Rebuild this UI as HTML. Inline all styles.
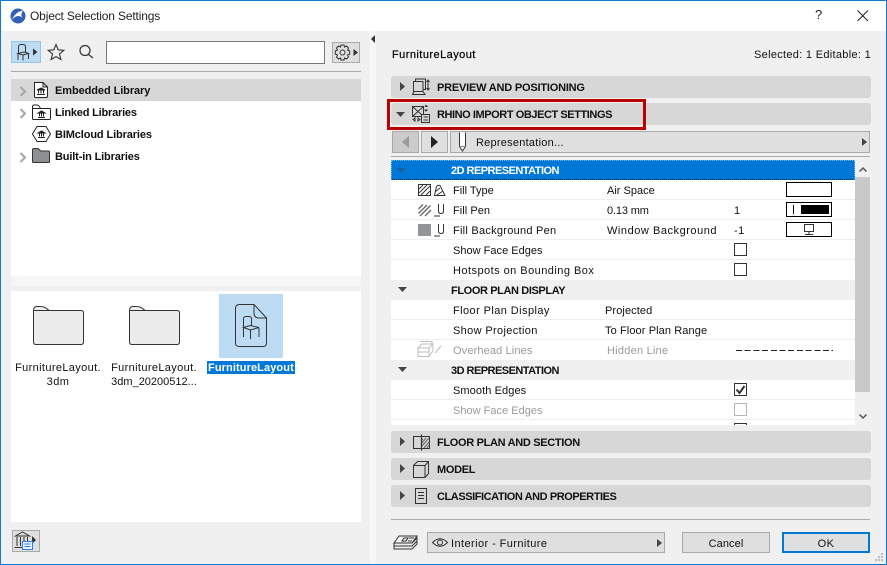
<!DOCTYPE html>
<html><head><meta charset="utf-8"><style>
html,body{margin:0;padding:0;background:#fff}
#w{position:relative;width:887px;height:565px;overflow:hidden;background:#f0f0f0;font:11px/14px "Liberation Sans",sans-serif;color:#111;letter-spacing:.42px}
#w div,#w span,#w svg{position:absolute;display:block;box-sizing:border-box}
.t{white-space:nowrap;margin-top:1px}
.b{font-weight:bold;letter-spacing:-.35px}
.g{color:#9a9a9a}
.sec{left:391px;width:480px;height:22px;background:#d7d7d7;border-radius:3px}
.btn{background:#dfdfdf;border:1px solid #a9a9a9}
.sep{left:391px;width:464px;height:1px;background:#eeeeee}
.cb{left:734px;width:13px;height:13px;border:1px solid #333;background:#fff}
.sw{left:786px;width:46px;height:15px;border:1px solid #000;background:#fff}
svg{overflow:visible}
</style></head><body><div id="w">
<div style="left:0;top:0;width:887px;height:31px;background:#fff"></div>
<div style="left:370px;top:31px;width:6px;height:533px;background:#f6f6f6"></div>
<svg style="left:10px;top:8px" width="16" height="16" viewBox="0 0 16 16"><circle cx="8" cy="8" r="7.500" fill="#2f62b5"/><path d="M2 12C4 6 9 3 13 2.500 11 5 11 8 12.500 10 9 6.500 5 8 2 12Z" fill="#fff"/></svg>
<div class="t" style="left:30px;top:8px;font-size:12px;color:#222;letter-spacing:-.16px">Object Selection Settings</div>
<div class="t" style="left:815px;top:7px;font-size:13px;color:#222">?</div>
<svg style="left:857px;top:10px" width="12" height="12"><path d="M.5.500 11 11M11 .5.500 11" stroke="#222" fill="none"/></svg>

<!-- left toolbar -->
<div style="left:11px;top:41px;width:30px;height:22px;background:#bddcf4;border:1px solid #94c6ee"></div>
<svg style="left:16px;top:44px" width="24" height="17" fill="none" stroke="#333"><path d="M2.500 9V3Q2.500 .5 5 .5H7Q9.500 .5 9.500 3V8M2 9.500 8 8 12.500 9.500 7 11ZM2 10V16M7 11V16.500M12.500 10V15"/><path d="M17 4.500 21.500 8 17 11.500Z" fill="#333" stroke="none"/></svg>
<svg style="left:47px;top:43px" width="18" height="18" fill="none" stroke="#333" stroke-width="1.100"><path d="M9 1.500 11.200 6.800 16.800 7.300 12.500 11 13.900 16.500 9 13.600 4.100 16.500 5.500 11 1.200 7.300 6.800 6.800Z"/></svg>
<svg style="left:78px;top:44px" width="16" height="15" fill="none" stroke="#333" stroke-width="1.200"><circle cx="7" cy="6.500" r="5"/><path d="M10.500 10.500 15 14"/></svg>
<div style="left:106px;top:41px;width:219px;height:23px;background:#fff;border:1px solid #777"></div>
<div class="btn" style="left:332px;top:42px;width:28px;height:21px"></div>
<svg style="left:334px;top:44px" width="25" height="17" fill="none" stroke="#333"><circle cx="8.500" cy="8.500" r="2.500"/><path d="M7 1H10L10.500 3 12.500 2 14.500 4 13.500 6 15.700 7V10L13.500 11 14.500 13 12.500 15 10.500 14 10 16H7L6.500 14 4.500 15 2.500 13 3.500 11 1.300 10V7L3.500 6 2.500 4 4.500 2 6.500 3Z"/><path d="M19.500 5 24 8.500 19.500 12Z" fill="#333" stroke="none"/></svg>
<div style="left:11px;top:71px;width:350px;height:1px;background:#aaa"></div>

<!-- tree -->
<div style="left:11px;top:79px;width:350px;height:197px;background:#fff"></div>
<div style="left:11px;top:276px;width:350px;height:10px;background:#f6f6f6"></div>
<div style="left:11px;top:79px;width:350px;height:22px;background:#d7d7d7"></div>
<svg style="left:19px;top:85px" width="8" height="80" fill="none" stroke="#a6a6a6" stroke-width="2"><path d="M1.500 2 6 6.500 1.500 11M1.500 24 6 28.500 1.500 33M1.500 68 6 72.500 1.500 77"/></svg>
<svg style="left:32px;top:81px" width="18" height="18" fill="#fff" stroke="#222"><path d="M2.500 1.500H11L15.500 6V15.500Q15.500 16.500 14.500 16.500H3.500Q2.500 16.500 2.500 15.500ZM11 1.500V6H15.500"/><path d="M5 9 9 7 13 9ZM6.500 9.500V12.500M9 9.500V12.500M11.500 9.500V12.500M5 13.500H13" fill="#222" stroke="#222"/></svg>
<svg style="left:32px;top:104px" width="19" height="16" fill="#fff" stroke="#222"><path d="M.5 3V14.500Q.5 15.500 1.500 15.500H17.500Q18.500 15.500 18.500 14.500V5.500Q18.500 4.500 17.500 4.500H.5M.5 3Q.5 1 2 1H5Q7 1 8.500 4.500"/><path d="M6 9 9.500 7 13 9ZM7.500 9.500V12.500M9.500 9.500V12.500M11.500 9.500V12.500M6 13.500H13" fill="#222"/></svg>
<svg style="left:32px;top:126px" width="19" height="16" fill="#fff" stroke="#222"><path d="M5 .5H14L18.500 8 14 15.500H5L.5 8Z"/><path d="M6 7 9.500 5 13 7ZM7.500 7.500V10.500M9.500 7.500V10.500M11.500 7.500V10.500M6 11.500H13" fill="#222"/></svg>
<svg style="left:32px;top:148px" width="18" height="15" fill="#8d8f92" stroke="#333"><path d="M.5 2Q.5 .5 2 .5H5Q7 .5 8.500 3H16.500Q17.500 3 17.500 4V13.500Q17.500 14.500 16.500 14.500H1.500Q.5 14.500 .5 13.500Z"/></svg>
<div class="t" style="left:55px;top:83px;font-weight:bold;letter-spacing:-.08px">Embedded Library</div>
<div class="t" style="left:55px;top:105px;font-weight:bold;letter-spacing:-.2px">Linked Libraries</div>
<div class="t" style="left:55px;top:127px;font-weight:bold;letter-spacing:-.12px">BIMcloud Libraries</div>
<div class="t" style="left:55px;top:149px;font-weight:bold;letter-spacing:-.15px">Built-in Libraries</div>

<!-- files -->
<div style="left:11px;top:291px;width:350px;height:231px;background:#fff"></div>
<svg style="left:33px;top:306px" width="52" height="41" fill="#ececec" stroke="#333"><path d="M.5 4.500Q.5 .5 4 .5H8Q12 .5 16 4.500H48Q50.500 4.500 50.500 7V36Q50.500 38.500 48 38.500H3Q.5 38.500 .5 36ZM.5 4.500H16"/></svg>
<svg style="left:129px;top:306px" width="52" height="41" fill="#ececec" stroke="#333"><path d="M.5 4.500Q.5 .5 4 .5H8Q12 .5 16 4.500H48Q50.500 4.500 50.500 7V36Q50.500 38.500 48 38.500H3Q.5 38.500 .5 36ZM.5 4.500H16"/></svg>
<div style="left:219px;top:294px;width:64px;height:64px;background:#bddcf4"></div>
<svg style="left:235px;top:304px" width="33" height="44" fill="none" stroke="#333"><path d="M4.500 .5H19L31.500 14V39Q31.500 42.500 28 42.500H4.500Q.5 42.500 .5 39V4.500Q.5 .5 4.500 .5ZM19 .5V9Q19 14 24 14H31.500"/><path d="M8.500 23V15Q8.500 12.500 11 12.500H14Q16.500 12.500 16.500 15V22M8.500 23.500 15 21.500 24 23.500 15.500 26ZM8.500 24V33M15.500 26V35M24 24V33"/></svg>
<div style="left:207px;top:361px;width:88px;height:13px;background:#0078d7"></div>
<div class="t" style="left:208px;top:360px;width:84px;text-align:center;color:#fff;font-weight:bold;letter-spacing:.1px">FurnitureLayout</div>
<div class="t" style="left:8px;top:360px;width:100px;text-align:center;letter-spacing:.36px">FurnitureLayout.</div>
<div class="t" style="left:8px;top:374px;width:100px;text-align:center">3dm</div>
<div class="t" style="left:104px;top:360px;width:100px;text-align:center;letter-spacing:.36px">FurnitureLayout.</div>
<div class="t" style="left:104px;top:374px;width:100px;text-align:center;letter-spacing:0">3dm_20200512...</div>
<div class="btn" style="left:12px;top:530px;width:28px;height:22px"></div>
<svg style="left:14px;top:531px" width="26" height="20" fill="none" stroke="#333"><path d="M1.500 5 8.500 1 15.500 5ZM3 6V15M6.500 6V15M10 6V10M13.500 6V10M.5 16.500H8"/><path d="M18 5 22 9 18 13Z" fill="#333" stroke="none"/><rect x="8.500" y="10.500" width="10" height="8" fill="#e8f0fb" stroke="#2e7de0"/><path d="M10.500 13H16.500M10.500 15.500H16.500" stroke="#2e7de0"/></svg>

<!-- divider arrow -->
<svg style="left:371px;top:35px" width="4" height="8"><path d="M4 0V8L0 4Z" fill="#333"/></svg>

<!-- right header -->
<div class="t" style="left:392px;top:47px;letter-spacing:.45px;color:#000;-webkit-text-stroke:.2px #000">FurnitureLayout</div>
<div class="t" style="right:16px;top:47px;letter-spacing:.3px">Selected: 1 Editable: 1</div>

<!-- sections -->
<div class="sec" style="top:76px"></div>
<svg style="left:400px;top:82px" width="5" height="9"><path d="M0 0 5 4.500 0 9Z" fill="#444"/></svg>
<svg style="left:412px;top:78px" width="20" height="18" fill="none" stroke="#333"><path d="M3.500 3.500V1H13.500V11.500H11M1.500 3.500H11V13.500H1.500ZM.5 16.500 2 13.500H11L13 16.500Z"/><path d="M16 2V12M14.500 4 16 2 17.500 4M14.500 10 16 12 17.500 10"/></svg>
<div class="t b" style="left:437px;top:80px;letter-spacing:-.2px">PREVIEW AND POSITIONING</div>

<div class="sec" style="top:103px"></div>
<svg style="left:396px;top:112px" width="9" height="5"><path d="M0 0H9L4.500 5Z" fill="#444"/></svg>
<svg style="left:412px;top:105px" width="19" height="18" fill="none" stroke="#333"><path d="M.5 1.500H11.500V11.500H.5ZM.5 1.500 11.500 11.500M11.500 1.500 .5 11.500"/><rect x="9.500" y="9.500" width="8" height="8" fill="#d7d7d7"/><path d="M11.500 12H16M11.500 15H16M13 1.500 14 .5 15 1.500 13 1.500M13 5H15L14 6ZM1 14.500 3 13V16ZM8 14.500 6 13V16Z"/></svg>
<div class="t b" style="left:437px;top:107px;letter-spacing:-.43px">RHINO IMPORT OBJECT SETTINGS</div>
<div style="left:387px;top:99px;width:259px;height:31px;border:3px solid #bb0000"></div>

<!-- nav row -->
<div class="btn" style="left:392px;top:131px;width:27px;height:22px;background:#cbcbcb"></div>
<svg style="left:402px;top:136px" width="7" height="12"><path d="M7 0V12L0 6Z" fill="#9b9b9b"/></svg>
<div class="btn" style="left:421px;top:131px;width:27px;height:22px"></div>
<svg style="left:431px;top:136px" width="7" height="12"><path d="M0 0V12L7 6Z" fill="#222"/></svg>
<div class="btn" style="left:450px;top:131px;width:420px;height:22px"></div>
<svg style="left:458px;top:132px" width="9" height="20" fill="#fff" stroke="#333"><path d="M1.500 .5V14.500L4.500 19 7.500 14.500V.5"/><path d="M1.500 14.500H7.500" stroke="#888"/></svg>
<div class="t" style="left:476px;top:135px;letter-spacing:.24px">Representation...</div>
<svg style="left:862px;top:138px" width="5" height="8"><path d="M0 0 5 4 0 8Z" fill="#444"/></svg>
<div style="left:391px;top:156px;width:479px;height:1px;background:#aaa"></div>

<!-- list -->
<div style="left:391px;top:160px;width:464px;height:265px;background:#fff"></div>
<div style="left:391px;top:160px;width:464px;height:20px;background:#0078d7;border:1px dotted #7fb5e0;border-bottom:1px dotted #0b2a4a"></div>
<svg style="left:397px;top:168px" width="9" height="5"><path d="M0 0H9L4.500 5Z" fill="#1c5f9e"/></svg>
<div class="t b" style="left:451px;top:163px;color:#fff;letter-spacing:-.53px">2D REPRESENTATION</div>
<div class="sep" style="top:199px"></div><div class="sep" style="top:219px"></div><div class="sep" style="top:239px"></div><div class="sep" style="top:259px"></div><div class="sep" style="top:319px"></div><div class="sep" style="top:339px"></div><div class="sep" style="top:399px"></div><div class="sep" style="top:419px"></div>
<div style="left:391px;top:280px;width:464px;height:20px;background:#f0f0f0"></div>
<div style="left:391px;top:360px;width:464px;height:20px;background:#f0f0f0"></div>

<svg style="left:418px;top:184px" width="28" height="13" fill="none" stroke="#333"><rect x=".5" y=".5" width="12" height="11"/><path d="M1 5 5 1M1 9 9 1M3 11 12 2M8 11 12 7"/><path d="M16.500 11.500 18 4.500 Q18.500 .5 22 1.500L27 11.500ZM17 8 22 4M19 11 25 7"/></svg>
<svg style="left:418px;top:204px" width="28" height="13" fill="none" stroke="#666" stroke-width="1.300"><path d="M.5 5 5 .5M.5 9.500 9 1M2 12 12.500 1.500M7 12 13 6"/><path d="M20.500 0V7Q20.500 9.500 23 9.500 25.500 9.500 25.500 7V0M16 12H22" stroke="#333" stroke-width="1"/></svg>
<svg style="left:418px;top:224px" width="28" height="13" fill="none"><rect width="13" height="12" fill="#929497"/><path d="M20.500 0V7Q20.500 9.500 23 9.500 25.500 9.500 25.500 7V0M16 12H22" stroke="#333"/></svg>
<svg style="left:417px;top:341px" width="28" height="17" fill="none" stroke="#bdbdbd"><path d="M3 .5H15V4M1 7 5 3H16L12 7ZM1 7V15.500H12V7M1 11 12 11M16 4V10L12 15M18 12 24 5"/></svg>

<div class="t" style="left:453px;top:183px;letter-spacing:0">Fill Type</div><div class="t" style="left:607px;top:183px;letter-spacing:0">Air Space</div>
<div class="t" style="left:453px;top:203px;letter-spacing:.05px">Fill Pen</div><div class="t" style="left:607px;top:203px;letter-spacing:-.15px">0.13 mm</div><div class="t" style="left:734px;top:203px">1</div>
<div class="t" style="left:453px;top:223px;letter-spacing:.26px">Fill Background Pen</div><div class="t" style="left:607px;top:223px;letter-spacing:.54px">Window Background</div><div class="t" style="left:734px;top:223px">-1</div>
<div class="t" style="left:453px;top:243px;letter-spacing:.02px">Show Face Edges</div>
<div class="t" style="left:453px;top:263px;letter-spacing:.46px">Hotspots on Bounding Box</div>
<div class="t b" style="left:451px;top:283px;color:#111;letter-spacing:-.39px">FLOOR PLAN DISPLAY</div>
<svg style="left:398px;top:287px" width="9" height="5"><path d="M0 0H9L4.500 5Z" fill="#444"/></svg>
<div class="t" style="left:453px;top:303px">Floor Plan Display</div><div class="t" style="left:605px;top:303px;letter-spacing:.1px">Projected</div>
<div class="t" style="left:453px;top:323px;letter-spacing:.35px">Show Projection</div><div class="t" style="left:605px;top:323px;letter-spacing:.1px">To Floor Plan Range</div>
<div class="t g" style="left:453px;top:343px;letter-spacing:.13px">Overhead Lines</div><div class="t g" style="left:607px;top:343px;letter-spacing:.24px">Hidden Line</div>
<div class="t b" style="left:451px;top:363px;letter-spacing:-.53px">3D REPRESENTATION</div>
<svg style="left:398px;top:367px" width="9" height="5"><path d="M0 0H9L4.500 5Z" fill="#444"/></svg>
<div class="t" style="left:453px;top:383px;letter-spacing:.09px">Smooth Edges</div>
<div class="t g" style="left:453px;top:403px;letter-spacing:.02px">Show Face Edges</div>

<div class="sw" style="top:182px"></div>
<div class="sw" style="top:202px"></div>
<div style="left:793px;top:205px;width:1px;height:9px;background:#000"></div>
<div style="left:801px;top:205px;width:28px;height:9px;background:#000"></div>
<div class="sw" style="top:222px"></div>
<svg style="left:803px;top:224px" width="12" height="12" fill="none" stroke="#333"><path d="M1.500 .5H10.500V7.500H1.500ZM6 8V10M2 10.500H10"/></svg>
<div class="cb" style="top:243px"></div>
<div class="cb" style="top:263px"></div>
<div style="left:736px;top:350px;width:97px;height:1px;background:repeating-linear-gradient(90deg,#222 0,#222 6px,transparent 6px,transparent 8.700px)"></div>
<div class="cb" style="top:383px"></div>
<svg style="left:735px;top:385px" width="11" height="10" fill="none" stroke="#333" stroke-width="2"><path d="M1.500 4.500 4.500 8 9.500 1"/></svg>
<div class="cb" style="top:403px;border-color:#b5b5b5"></div>
<div style="left:734px;top:423px;width:13px;height:2px;background:#fff;border:1px solid #333;border-bottom:0"></div>
<div style="left:391px;top:425px;width:480px;height:6px;background:#f0f0f0"></div>

<!-- scrollbar -->
<svg style="left:859px;top:167px" width="8" height="5" fill="none" stroke="#555" stroke-width="1.500"><path d="M.5 4.500 4 1 7.500 4.500"/></svg>
<div style="left:855px;top:177px;width:15px;height:215px;background:#c9c9c9"></div>
<svg style="left:859px;top:414px" width="8" height="5" fill="none" stroke="#555" stroke-width="1.500"><path d="M.5 .5 4 4 7.500 .5"/></svg>

<div class="sec" style="top:431px"></div>
<svg style="left:400px;top:437px" width="5" height="9"><path d="M0 0 5 4.500 0 9Z" fill="#444"/></svg>
<svg style="left:413px;top:434px" width="18" height="17" fill="none" stroke="#333"><path d="M.5 2.500H16.500V14.500H.5Z"/><path d="M10 5 8 7M13 4 8 10M16 4 8 13M16 8 11 14M16 11 14 14" stroke="#666"/><path d="M8.500 .5V16.500" stroke-width="1.200"/></svg>
<div class="t b" style="left:437px;top:435px;letter-spacing:-.32px">FLOOR PLAN AND SECTION</div>
<div class="sec" style="top:458px"></div>
<svg style="left:400px;top:464px" width="5" height="9"><path d="M0 0 5 4.500 0 9Z" fill="#444"/></svg>
<svg style="left:413px;top:461px" width="17" height="17" fill="none" stroke="#333"><path d="M.5 4.500 4.500 .5H15.500V12.500L12 16.500H.5ZM.5 4.500H12V16.500M12 4.500 15.500 .5"/></svg>
<div class="t b" style="left:437px;top:462px;letter-spacing:-.3px">MODEL</div>
<div class="sec" style="top:485px"></div>
<svg style="left:400px;top:491px" width="5" height="9"><path d="M0 0 5 4.500 0 9Z" fill="#444"/></svg>
<svg style="left:415px;top:488px" width="12" height="16" fill="none" stroke="#333"><path d="M.5 .5H11.500V15.500H.5ZM3 4.500H9M3 7.500H9M3 10.500H9"/></svg>
<div class="t b" style="left:437px;top:489px;letter-spacing:-.43px">CLASSIFICATION AND PROPERTIES</div>
<div style="left:391px;top:519px;width:479px;height:1px;background:#aaa"></div>

<!-- bottom -->
<svg style="left:393px;top:534px" width="25" height="17" fill="#f0f0f0" stroke="#333"><path d="M1 12H19L24 7V10L19 15H1ZM1 9H19L24 4V7L19 12H1ZM1 9 6 2H24L19 9Z"/><path d="M9 7 11 4H15L13 7ZM15 7H19M16 4H21" /></svg>
<div class="btn" style="left:427px;top:532px;width:238px;height:21px"></div>
<svg style="left:432px;top:537px" width="16" height="11" fill="none" stroke="#333"><path d="M.5 5.500Q8-2 15.500 5.500 8 13 .5 5.500Z"/><circle cx="8" cy="5.500" r="2.500"/></svg>
<div class="t" style="left:451px;top:536px">Interior - Furniture</div>
<svg style="left:657px;top:539px" width="5" height="8"><path d="M0 0 5 4 0 8Z" fill="#444"/></svg>
<div class="btn" style="left:682px;top:532px;width:88px;height:21px"></div>
<div class="t" style="left:682px;top:536px;width:88px;text-align:center;letter-spacing:.1px">Cancel</div>
<div class="btn" style="left:782px;top:532px;width:88px;height:21px;border:2px solid #0078d7"></div>
<div class="t" style="left:782px;top:536px;width:88px;text-align:center">OK</div>
<svg style="left:875px;top:553px" width="9" height="9" fill="#bbb"><rect x="6" width="2" height="2"/><rect x="3" y="3" width="2" height="2"/><rect x="6" y="3" width="2" height="2"/><rect y="6" width="2" height="2"/><rect x="3" y="6" width="2" height="2"/><rect x="6" y="6" width="2" height="2"/></svg>

<!-- window border -->
<div style="left:0;top:0;width:887px;height:565px;border:1px solid #0f7ad6"></div>
</div></body></html>
